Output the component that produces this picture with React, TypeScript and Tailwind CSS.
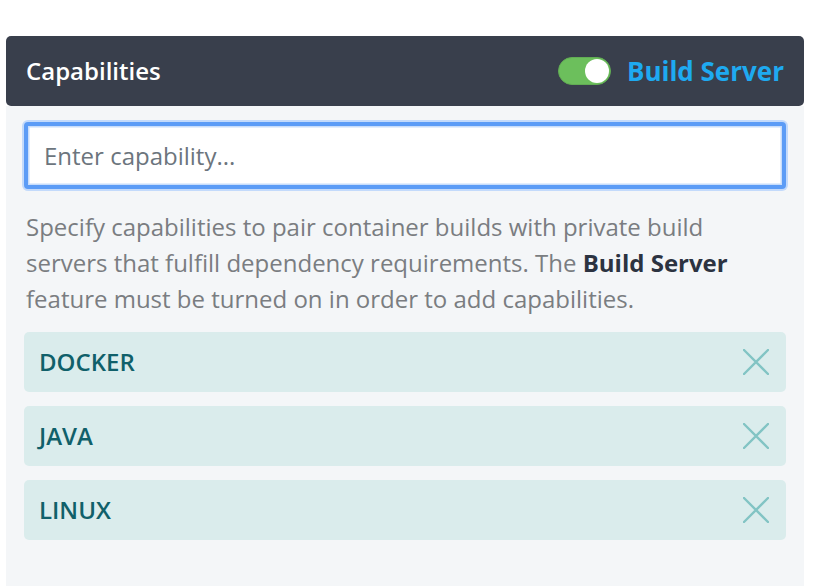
import React from "react";

const items = ["DOCKER", "JAVA", "LINUX"];

function XIcon() {
  return (
    <svg width="26" height="26" viewBox="0 0 26 26" fill="none">
      <path d="M1 1L25 25M25 1L1 25" stroke="#82c4c4" strokeWidth="2.4" strokeLinecap="round" />
    </svg>
  );
}

export default function App() {
  return (
    <div
      className="w-[822px] h-[586px] bg-white pt-[36px] pl-[6px] pr-[18px] overflow-hidden"
      style={{ fontFamily: '"Open Sans", "Noto Sans", sans-serif' }}
    >
      <div className="w-[798px] h-[550px] flex flex-col">
        <div className="h-[70px] rounded-[5px] bg-[#393f4c] flex items-center justify-between pl-[20px] pr-[20px]">
          <div className="text-white text-[24px] font-semibold leading-none">Capabilities</div>
          <div className="flex items-center gap-[16px]">
            <div className="relative w-[53px] h-[28px] rounded-full bg-[#6cbf5c] border border-[#62ad54]">
              <div className="absolute right-[1px] top-[1px] w-[24px] h-[24px] rounded-full bg-white" />
            </div>
            <div className="text-[#1eaaf1] text-[26px] font-bold leading-none">Build Server</div>
          </div>
        </div>
        <div className="flex-1 bg-[#f4f6f8] px-[18px] pt-[16px]">
          <input
            className="block w-[762px] h-[67px] bg-white border-[4px] border-[#5c9cf6] rounded-[4px] px-[16px] text-[24px] text-[#495057] placeholder:text-[#6c757d] outline-none shadow-[0_0_0_2px_#c3dafb,inset_0_0_0_1.5px_#c8ddfb]"
            placeholder="Enter capability..."
          />
          <p className="mt-[20px] text-[24px] leading-[36px] text-[#7a7d81] pl-[2px]">
            Specify capabilities to pair container builds with private build servers that fulfill
            dependency requirements. The <b className="font-bold text-[#2c3341]">Build Server</b>{" "}
            feature must be turned on in order to add capabilities.
          </p>
          <div className="mt-[15px] flex flex-col gap-[14px]">
            {items.map((it) => (
              <div
                key={it}
                className="h-[60px] rounded-[5px] bg-[#daecec] flex items-center justify-between pl-[15px] pr-[17px]"
              >
                <span className="text-[24px] font-semibold text-[#10606a]">{it}</span>
                <XIcon />
              </div>
            ))}
          </div>
        </div>
      </div>
    </div>
  );
}
